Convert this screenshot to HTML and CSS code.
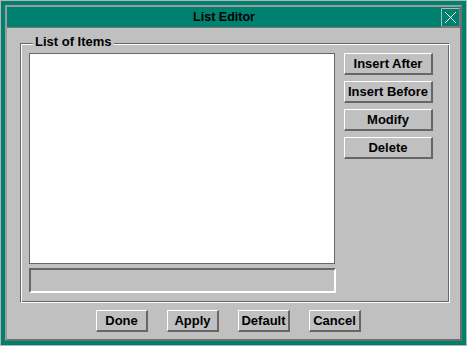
FILE: index.html
```html
<!DOCTYPE html>
<html lang="en">
<head>
  <meta charset="UTF-8">
  <title>List Editor</title>
  <link rel="stylesheet" href="styles.css">
</head>
<body>

<div class="window">
  <div class="frame">
    <div class="titlebar">
      <span class="title">List Editor</span>
      <span class="close-box">
        <svg width="19" height="19" viewBox="0 0 19 19">
          <path d="M0.5 18.5V0.5H18.5" fill="none" stroke="#b8b8b8"/>
          <path d="M18.5 0.5V18.5H0.5" fill="none" stroke="#7a7a7a"/>
          <path d="M4 4L15 15M15 4L4 15" stroke="#ffffff" stroke-width="1"/>
        </svg>
      </span>
    </div>

    <div class="content">
      <div class="group">
        <span class="group-label">List of Items</span>
        <div class="group-body">
          <div class="list-column">
            <div class="listbox"></div>
            <div class="textfield"></div>
          </div>
          <div class="side-buttons">
            <button class="btn">Insert After</button>
            <button class="btn">Insert Before</button>
            <button class="btn">Modify</button>
            <button class="btn">Delete</button>
          </div>
        </div>
      </div>

      <div class="bottom-buttons">
        <button class="btn small">Done</button>
        <button class="btn small">Apply</button>
        <button class="btn small">Default</button>
        <button class="btn small">Cancel</button>
      </div>
    </div>
  </div>
</div>

</body>
</html>
```

FILE: styles.css
```css
html, body {
  margin: 0;
  height: 346px;
}
body {
  background-color: #b4b4b4;
  padding: 1px;
  box-sizing: border-box;
  font-family: 'Liberation Sans', Arial, sans-serif;
  font-size: 13px;
  font-weight: bold;
  color: black;
}
.window {
  width: 465px;
  height: 344px;
  border: 4px solid #00806f;
  box-sizing: border-box;
}
.frame {
  height: 100%;
  box-sizing: border-box;
  border: 2px solid;
  border-color: #9c9c9c #6e6e6e #6e6e6e #9c9c9c;
  background-color: #c0c0c0;
}
.titlebar {
  height: 20px;
  background-color: #00806f;
  border-bottom: 1px solid #7a7a7a;
  display: flex;
  align-items: center;
}
.title {
  flex: 1;
  text-align: center;
  line-height: 20px;
  font-size: 12.5px;
}
.close-box {
  width: 19px;
  height: 19px;
  display: flex;
}
.content {
  padding: 15px 0 0 13px;
}
.group {
  position: relative;
  width: 430px;
  height: 260px;
  box-sizing: border-box;
  border: 1px solid;
  border-color: #666 #fff #fff #666;
  box-shadow: inset 1px 1px #fff, inset -1px -1px #666;
  padding: 9px 16px 9px 8px;
}
.group-label {
  position: absolute;
  top: -9px;
  left: 12px;
  padding: 0 2px;
  line-height: 14px;
  background-color: #c0c0c0;
}
.group-body {
  display: flex;
  gap: 8px;
}
.list-column {
  display: flex;
  flex-direction: column;
  gap: 4px;
  width: 307px;
}
.listbox {
  width: 306px;
  height: 211px;
  box-sizing: border-box;
  border: 1px solid #666;
  background-color: white;
}
.textfield {
  width: 307px;
  height: 25px;
  box-sizing: border-box;
  border: 2px solid;
  border-color: #666 #fff #fff #666;
}
.side-buttons {
  display: flex;
  flex-direction: column;
  gap: 6px;
}
.btn {
  width: 89px;
  height: 22px;
  padding: 0;
  box-sizing: border-box;
  background-color: #c0c0c0;
  border-style: solid;
  border-width: 1px 2px 2px 1px;
  border-color: #fff #666 #666 #fff;
  font-family: 'Liberation Sans', Arial, sans-serif;
  font-size: 13px;
  font-weight: bold;
  color: black;
}
.btn.small {
  width: 52px;
}
.bottom-buttons {
  display: flex;
  gap: 19px;
  margin-top: 7px;
  padding-left: 76px;
}
```
